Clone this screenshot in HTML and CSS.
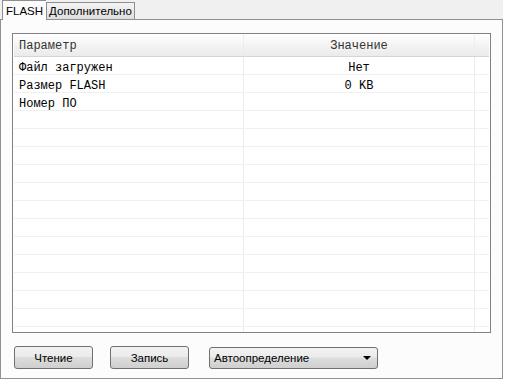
FILE: index.html
```html
<!DOCTYPE html>
<html lang="ru">

<head>
    <meta charset="UTF-8">
    <title>FLASH</title>
    <link rel="stylesheet" href="styles.css">
</head>

<body>
    <div class="window">
        <div class="tabs">
            <div class="tab active">FLASH</div>
            <div class="tab">Дополнительно</div>
        </div>

        <div class="pane">
            <div class="grid">
                <div class="row head">
                    <div class="cell name">Параметр</div>
                    <div class="cell value">Значение</div>
                    <div class="cell spare"></div>
                </div>
                <div class="row">
                    <div class="cell name">Файл загружен</div>
                    <div class="cell value">Нет</div>
                    <div class="cell spare"></div>
                </div>
                <div class="row">
                    <div class="cell name">Размер FLASH</div>
                    <div class="cell value">0 KB</div>
                    <div class="cell spare"></div>
                </div>
                <div class="row">
                    <div class="cell name">Номер ПО</div>
                    <div class="cell value"></div>
                    <div class="cell spare"></div>
                </div>
                <div class="row"><div class="cell name"></div><div class="cell value"></div><div class="cell spare"></div></div>
                <div class="row"><div class="cell name"></div><div class="cell value"></div><div class="cell spare"></div></div>
                <div class="row"><div class="cell name"></div><div class="cell value"></div><div class="cell spare"></div></div>
                <div class="row"><div class="cell name"></div><div class="cell value"></div><div class="cell spare"></div></div>
                <div class="row"><div class="cell name"></div><div class="cell value"></div><div class="cell spare"></div></div>
                <div class="row"><div class="cell name"></div><div class="cell value"></div><div class="cell spare"></div></div>
                <div class="row"><div class="cell name"></div><div class="cell value"></div><div class="cell spare"></div></div>
                <div class="row"><div class="cell name"></div><div class="cell value"></div><div class="cell spare"></div></div>
                <div class="row"><div class="cell name"></div><div class="cell value"></div><div class="cell spare"></div></div>
                <div class="row"><div class="cell name"></div><div class="cell value"></div><div class="cell spare"></div></div>
                <div class="row"><div class="cell name"></div><div class="cell value"></div><div class="cell spare"></div></div>
                <div class="row"><div class="cell name"></div><div class="cell value"></div><div class="cell spare"></div></div>
                <div class="row last"><div class="cell name"></div><div class="cell value"></div><div class="cell spare"></div></div>
            </div>

            <div class="actions">
                <button class="btn">Чтение</button>
                <button class="btn">Запись</button>
                <div class="combo">
                    <span>Автоопределение</span>
                    <span class="arrow"></span>
                </div>
            </div>
        </div>
    </div>
</body>

</html>
```

FILE: styles.css
```css
/* General Styles */
body {
    margin: 0;
    background-color: #ffffff;
    font-family: 'Liberation Sans', Arial, sans-serif;
    font-size: 11.5px;
    color: #000;
}

.window {
    width: 505px;
    height: 382px;
    background-color: #ffffff;
}

/* Tabs */
.tabs {
    display: flex;
    align-items: flex-end;
    height: 19px;
    padding-left: 2px;
    background-color: #f0f0f0;
    border-bottom: 1px solid #919191;
    margin-right: 2px;
    font-size: 11.5px;
}

.tab {
    height: 16px;
    padding: 0 2px;
    line-height: 17px;
    border: 1px solid #8e8e8e;
    border-bottom: none;
    background: linear-gradient(#f4f4f4, #dedede);
}

.tab.active {
    height: 19px;
    line-height: 20px;
    padding: 0 3px;
    background: #fcfcfc;
    margin-bottom: -1px;
    border-right: none;
    position: relative;
    z-index: 1;
}

.pane {
    height: 359px;
    margin-right: 2px;
    border: 1px solid #919191;
    border-top: none;
    background-color: #fcfcfc;
    padding: 13px 0 0 11px;
    box-sizing: border-box;
}

/* Table */
.grid {
    width: 479px;
    height: 300px;
    box-sizing: border-box;
    border: 1px solid #828282;
    background-color: #ffffff;
    padding: 1px;
    overflow: hidden;
}

.row {
    display: flex;
    height: 18px;
    border-bottom: 1px solid #f0f0f0;
    box-sizing: border-box;
    font-family: 'Liberation Mono', monospace;
    font-size: 12px;
    color: #000;
}

.row.head {
    height: 22px;
    border-bottom: 1px solid #d5d5d5;
    background: linear-gradient(#ffffff, #f3f3f3 50%, #ebebeb);
    color: #333;
}

.cell {
    box-sizing: border-box;
    padding-top: 2px;
    line-height: 18px;
    white-space: nowrap;
}

.head .cell {
    padding-top: 1px;
    line-height: 21px;
}

.cell.name {
    width: 230px;
    padding-left: 5px;
    border-right: 1px solid #ececec;
}

.cell.value {
    width: 231px;
    text-align: center;
    border-right: 1px solid #ececec;
}

.cell.spare {
    flex: 1;
}

/* Bottom bar */
.actions {
    display: flex;
    align-items: center;
    margin-top: 13px;
    padding-left: 2px;
}

.btn {
    width: 79px;
    height: 23px;
    margin-right: 17px;
    border: 1px solid #707070;
    border-radius: 3px;
    background: linear-gradient(#f2f2f2, #ebebeb 45%, #dddddd 50%, #cfcfcf);
    font-family: 'Liberation Sans', Arial, sans-serif;
    font-size: 11.5px;
    color: #000;
    padding: 0;
}

.combo {
    width: 169px;
    height: 22px;
    margin-left: 3px;
    border: 1px solid #707070;
    border-radius: 3px;
    background: linear-gradient(#f2f2f2, #ebebeb 45%, #dddddd 50%, #cfcfcf);
    display: flex;
    align-items: center;
    justify-content: space-between;
    padding: 0 6px 0 4px;
    box-sizing: border-box;
}

.arrow {
    width: 0;
    height: 0;
    border-left: 4px solid transparent;
    border-right: 4px solid transparent;
    border-top: 4px solid #000;
}
```
